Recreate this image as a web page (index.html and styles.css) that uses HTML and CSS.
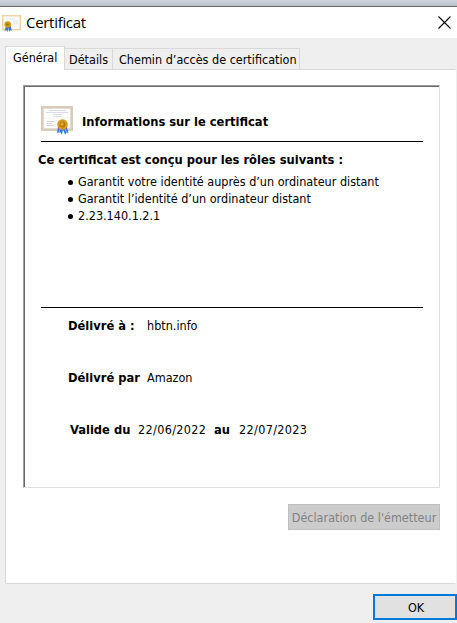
FILE: index.html
```
<!DOCTYPE html>
<html lang="fr">
<head>
<meta charset="utf-8">
<title>Certificat</title>
<link rel="stylesheet" href="styles.css">
</head>
<body>
<div class="backdrop"></div>
<header class="titlebar">
  <svg class="title-icon" width="19" height="17" viewBox="0 0 19 17">
    <rect x=".7" y=".7" width="17.600" height="14" fill="#fbfbf8" stroke="#efcfa3" stroke-width="1.400"/>
    <path d="M4 4h9M11 6h5M11 8h5" stroke="#e3e5ea"/>
    <path d="M4 11 2.500 16l2-1 1 2 .8-4 1 4 1-2 1.500 1-1-5z" fill="#3973d8"/>
    <circle cx="5.700" cy="9.500" r="3.300" fill="#d39a12"/><circle cx="5.700" cy="9.500" r="1.300" fill="#a86e08"/>
  </svg>
  <h1 class="title">Certificat</h1>
  <svg class="close" width="13" height="13" viewBox="0 0 13 13"><path d="M.5.5l12 12M12.500.5l-12 12" stroke="#000" stroke-width="1.100"/></svg>
</header>
<main class="dialog">
  <nav class="tabs">
    <div class="tab active">Général</div>
    <div class="tab details">Détails</div>
    <div class="tab path">Chemin d’accès de certification</div>
  </nav>
  <section class="panel">
    <div class="sheet">
      <div class="heading">
        <svg width="33" height="30" viewBox="0 0 33 30">
          <rect x="1.300" y="1.300" width="29.400" height="22.400" fill="#fbfbf7" stroke="#d6ccb9" stroke-width="2.600"/>
          <path d="M8 4.500h17M5 6.500h22M12 8.500h9M12 10.500h9" stroke="#d4d9e6" stroke-width=".9"/>
          <path d="M6 15.500h7M6 17.500h5M6 19.500h7" stroke="#c5c8ce" stroke-width=".8"/>
          <path d="M17 21 16 27l3-1 2 2.500 1-5 2 5 1.500-2 2 .5-2-7z" fill="#3478e4"/>
          <path d="M19 23l-1 4M24 23l2 4" stroke="#83b4ff"/>
          <circle cx="21.500" cy="18.500" r="5.300" fill="#d99b18"/><circle cx="21.500" cy="18.500" r="3" fill="#b97c0c"/><circle cx="21" cy="18" r="1.600" fill="#e2ae36"/>
        </svg>
        <h2>Informations sur le certificat</h2>
      </div>
      <div class="rule"></div>
      <h3>Ce certificat est conçu pour les rôles suivants :</h3>
      <ul class="roles">
        <li>Garantit votre identité auprès d’un ordinateur distant</li>
        <li>Garantit l’identité d’un ordinateur distant</li>
        <li>2.23.140.1.2.1</li>
      </ul>
      <div class="rule"></div>
      <div class="facts">
        <div class="fact"><b>Délivré à :</b><span>hbtn.info</span></div>
        <div class="fact"><b>Délivré par</b><span>Amazon</span></div>
        <div class="fact validity"><b>Valide du</b><span class="date">22/06/2022</span><b class="until">au</b><span class="date">22/07/2023</span></div>
      </div>
    </div>
    <button class="statement" disabled>Déclaration de l'émetteur</button>
  </section>
  <button class="ok">OK</button>
</main>
</body>
</html>
```
FILE: styles.css
```
* { box-sizing: border-box; }
body {
  margin: 0; width: 457px; height: 623px; overflow: hidden;
  background: #efefef; color: #000;
  font: 12.5px/17px "DejaVu Sans Condensed", "DejaVu Sans", sans-serif;
  font-stretch: condensed;
  white-space: nowrap;
}
h1, h2, h3, ul { margin: 0; padding: 0; font-size: inherit; }
h2, h3, b { font-size: 12.8px; }
svg { display: block; flex: none; }
.backdrop { height: 7px; background: linear-gradient(#d0d6e0, #b9bfc9); border-bottom: 1px solid #666; }
.titlebar { height: 31px; background: #fff; display: flex; padding: 8px 6px 0 2px; }
.title { font: 15px/17px "Open Sans", sans-serif; font-stretch: normal; letter-spacing: -.3px; margin: -1px 0 0 5px; flex: 1; }
.close { margin-top: 1px; }
.dialog { display: flex; flex-direction: column; padding: 8px 1px 0 5px; }
.tabs { display: flex; align-items: flex-end; height: 23px; }
.tab { height: 21px; border: 1px solid #d9d9d9; border-left: 0; border-bottom: 0; padding: 2px 0 0 4px; }
.tab.active { width: 60px; height: 24px; margin-bottom: -1px; border-left: 1px solid #d9d9d9; background: #fff; padding: 2px 0 0 7px; position: relative; }
.details { width: 48px; }
.path { width: 187px; padding-left: 6px; }
.panel { height: 515px; background: #fff; border: 1px solid #d9d9d9; border-right-color: #fff; padding: 15px 15px 0 17px; display: flex; flex-direction: column; align-items: flex-end; }
.sheet { width: 417px; height: 403px; border: 1px solid #dfdfdf; border-top-color: #a0a0a0; border-left-color: #a0a0a0; box-shadow: inset 1px 1px #696969; padding: 20px 16px 0 14px; flex: none; }
.heading { display: flex; padding-left: 3px; height: 35px; }
.heading h2 { margin: 7px 0 0 8px; }
.rule { height: 1px; background: #000; margin-left: 3px; }
h3 { height: 31px; padding-top: 9px; }
.roles { list-style: none; height: 134px; padding-left: 30px; }
.roles li { display: flex; align-items: center; height: 17px; }
.roles li::before { content: ""; width: 5px; height: 5px; margin: 2px 5px 0 0; background: #000; border-radius: 50%; }
.facts { padding: 9px 0 0 30px; }
.fact { display: flex; height: 52px; }
.fact > b { width: 79px; }
.validity { padding-left: 2px; }
.validity > b { width: 68px; }
.validity > .until { width: 25px; margin-left: 8px; }
.date { width: 68px; letter-spacing: .35px; }
button { font: inherit; color: inherit; padding: 0; }
.statement { width: 152px; height: 26px; margin-top: 16px; background: #ccc; border: 1px solid #bfbfbf; color: #838383; }
.ok { width: 84px; height: 26px; align-self: flex-end; margin: 10px -1px 0 0; padding-left: 2px; background: #e1e1e1; border: 2px solid #0078d7; }
```
